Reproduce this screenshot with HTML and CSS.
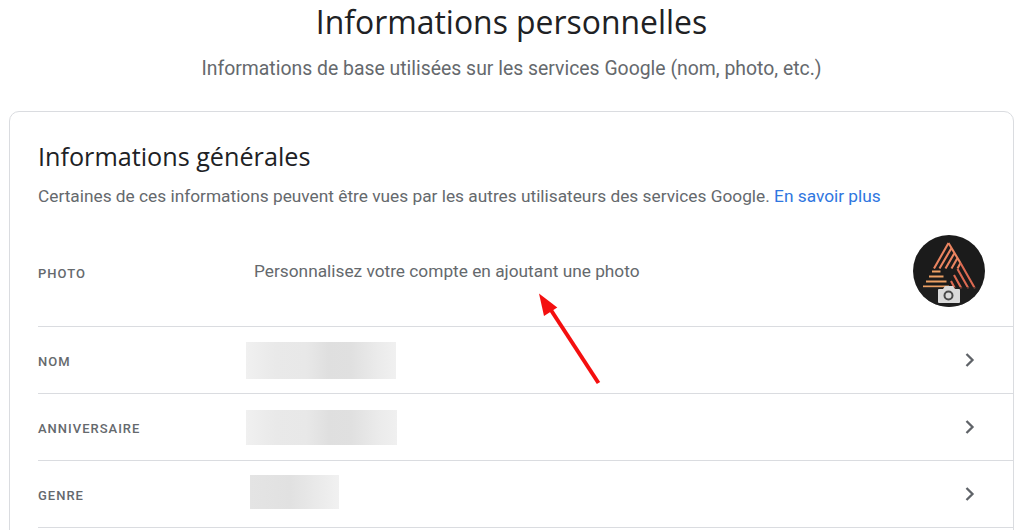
FILE: index.html
```html
<!DOCTYPE html>
<html lang="fr">
<head>
<meta charset="utf-8">
<title>Informations personnelles</title>
<link rel="stylesheet" href="styles.css">
</head>
<body>
<main class="page">
  <header class="head">
    <h1 class="title">Informations personnelles</h1>
    <p class="subtitle">Informations de base utilisées sur les services Google (nom, photo, etc.)</p>
  </header>
  <section class="card">
    <div class="intro">
      <h2 class="card-title">Informations générales</h2>
      <p class="card-text">Certaines de ces informations peuvent être vues par les autres utilisateurs des services Google. <a class="link" href="#">En savoir plus</a></p>
    </div>
    <div class="row row-photo">
      <div class="label label-photo">Photo</div>
      <div class="value photo-text">Personnalisez votre compte en ajoutant une photo</div>
      <svg class="avatar" viewBox="0 0 72 72" width="72" height="72" role="img" aria-label="Photo de profil">
        <defs>
          <clipPath id="disc"><circle cx="36" cy="36" r="36"/></clipPath>
        </defs>
        <g clip-path="url(#disc)">
          <rect width="72" height="72" fill="#1b1b1b"/>
          <g class="logo" stroke-width="2.100" fill="none">
            <path stroke="#ea8460" d="M35.500 8 L21 33.500 M38.500 13 L26.500 33.500 M41.500 18 L32.500 33.500 M44.500 23 L38.500 33.500 M47.500 28 L44.500 33.500 M35.500 8 L47.500 28"/>
            <path stroke="#eca064" d="M19 36.500 H27.500 M16 41.500 H30.500 M13 46.500 H33.500 M10 51.500 H36"/>
            <path stroke="#dd6a52" d="M47.500 28 L62 53.500 M44.500 34 L55.500 53.500 M41 40 L48.500 53.500 M38 46 L42 53.500"/>
          </g>
          <rect y="52" width="72" height="20" fill="#222" opacity=".6"/>
          <path class="camera" d="M27 54 H30 L32 51 H40 L42 54 H46 Q47 54 47 55 V67 Q47 68 46 68 H26 Q25 68 25 67 V55 Q25 54 26 54 Z" fill="#dadada"/>
          <circle cx="35.500" cy="60.500" r="4" fill="none" stroke="#4a4a4a" stroke-width="2"/>
        </g>
      </svg>
    </div>
    <div class="row">
      <div class="label">Nom</div>
      <div class="value"><div class="blur blur-name"></div></div>
      <svg class="chevron" viewBox="0 0 24 24" width="24" height="24"><path d="M9.500 6 15.500 12l-6 6" fill="none" stroke="#5f6368" stroke-width="2.300"/></svg>
    </div>
    <div class="row">
      <div class="label">Anniversaire</div>
      <div class="value"><div class="blur blur-birth"></div></div>
      <svg class="chevron" viewBox="0 0 24 24" width="24" height="24"><path d="M9.500 6 15.500 12l-6 6" fill="none" stroke="#5f6368" stroke-width="2.300"/></svg>
    </div>
    <div class="row">
      <div class="label">Genre</div>
      <div class="value"><div class="blur blur-gender"></div></div>
      <svg class="chevron" viewBox="0 0 24 24" width="24" height="24"><path d="M9.500 6 15.500 12l-6 6" fill="none" stroke="#5f6368" stroke-width="2.300"/></svg>
    </div>
  </section>
  <svg class="arrow" viewBox="0 0 70 100" width="70" height="100" aria-hidden="true">
    <path d="M64.500 96 L13 17" stroke="#f40f0f" stroke-width="4" fill="none"/>
    <path d="M5 6.500 L23.300 20.500 L10 29 Z" fill="#f40f0f"/>
  </svg>
</main>
</body>
</html>
```
FILE: styles.css
```css
html, body {
  margin: 0;
  height: 530px;
  overflow: hidden;
  background: #fff;
}
body {
  font-family: Roboto, "Liberation Sans", sans-serif;
  color: #65696d;
}
.page {
  position: relative;
  padding: 0 10px 0 9px;
  height: 530px;
  overflow: hidden;
}
.head {
  text-align: center;
}
.title {
  margin: 0;
  padding-top: 2px;
  font-family: "Open Sans", Roboto, sans-serif;
  font-size: 31.900px;
  font-weight: 400;
  line-height: 40px;
  color: #202124;
}
.subtitle {
  margin: 15px 0 0;
  font-size: 19.400px;
  line-height: 24px;
}
.card {
  margin-top: 30px;
  border: 1px solid #dadce0;
  border-radius: 10px;
  padding-left: 28px;
  height: 600px;
}
.intro {
  padding: 26px 0 10px;
}
.card-title {
  margin: 0;
  font-family: "Open Sans", Roboto, sans-serif;
  font-size: 25.200px;
  font-weight: 400;
  line-height: 36px;
  color: #202124;
}
.card-text {
  margin: 12px 0 0;
  font-size: 17.300px;
  line-height: 20px;
}
.link {
  color: #2f76e0;
  text-decoration: none;
}
.row {
  display: flex;
  align-items: center;
  height: 66px;
  border-bottom: 1px solid #dadce0;
}
.row-photo {
  height: 110px;
}
.label {
  width: 208px;
  flex: none;
  padding-top: 3px;
  font-size: 13px;
  font-weight: 500;
  letter-spacing: 1px;
  text-transform: uppercase;
  color: #65696d;
}
.label-photo {
  padding-top: 5px;
}
.value {
  flex: 1;
}
.photo-text {
  padding-left: 8px;
  font-size: 17.300px;
}
.avatar {
  flex: none;
  margin-right: 28px;
}
.logo {
  filter: blur(0.3px);
}
.chevron {
  flex: none;
  margin-right: 32px;
}
.blur {
  background: linear-gradient(90deg, #f0f0f0, #e9e9e9 20%, #e8e8e8 40%, #dfdfdf 55%, #e0e0e0 70%, #ebebeb 88%, #f0f0f0);
}
.blur-name {
  width: 150px;
  height: 37px;
}
.blur-birth {
  width: 151px;
  height: 35px;
}
.blur-gender {
  width: 89px;
  height: 34px;
  margin-left: 4px;
  margin-bottom: 4px;
  background: linear-gradient(90deg, #e4e4e4, #e1e1e1 45%, #f1f1f1);
}
.arrow {
  position: absolute;
  left: 534px;
  top: 287px;
}
```
